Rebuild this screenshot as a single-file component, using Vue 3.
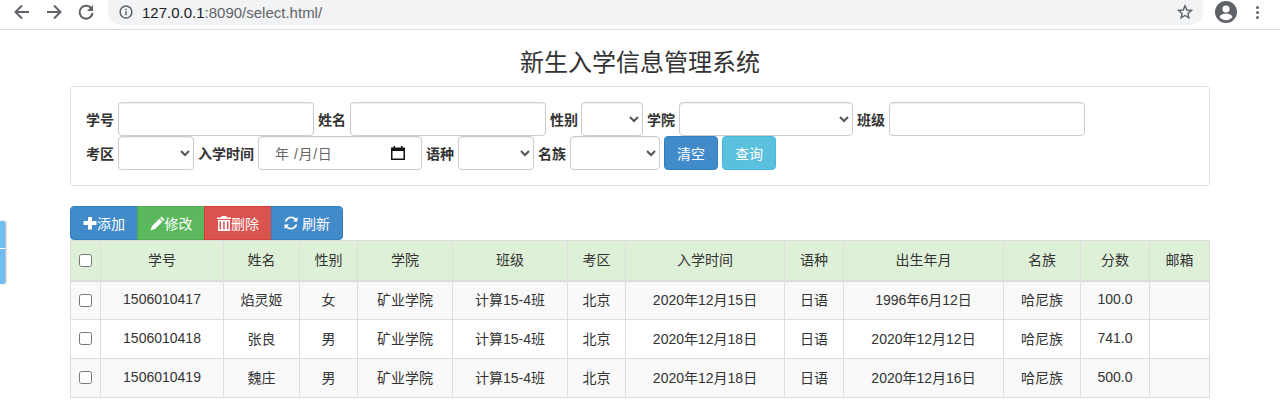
<script setup>
const columns = [
  { name: '学号', w: 123 }, { name: '姓名', w: 76 }, { name: '性别', w: 58 }, { name: '学院', w: 95 },
  { name: '班级', w: 115 }, { name: '考区', w: 58 }, { name: '入学时间', w: 159 }, { name: '语种', w: 59 },
  { name: '出生年月', w: 160 }, { name: '名族', w: 77 }, { name: '分数', w: 69 }, { name: '邮箱', w: 60 }
]

const students = [
  ['1506010417', '焰灵姬', '女', '矿业学院', '计算15-4班', '北京', '2020年12月15日', '日语', '1996年6月12日', '哈尼族', '100.0', ''],
  ['1506010418', '张良', '男', '矿业学院', '计算15-4班', '北京', '2020年12月18日', '日语', '2020年12月12日', '哈尼族', '741.0', ''],
  ['1506010419', '魏庄', '男', '矿业学院', '计算15-4班', '北京', '2020年12月18日', '日语', '2020年12月16日', '哈尼族', '500.0', '']
]
</script>

<template>
  <header class="chrome-bar">
    <svg class="nav" width="18" height="18" viewBox="0 0 18 18"><path d="M16 9H3M9 2.500 2.500 9 9 15.500" /></svg>
    <svg class="nav fwd" width="18" height="18" viewBox="0 0 18 18"><path d="M2 9h13M9 2.500 15.500 9 9 15.500" /></svg>
    <svg class="nav reload" width="18" height="18" viewBox="0 0 18 18">
      <path d="M14.600 6A6.400 6.400 0 1 0 15.400 10" />
      <path class="fill" d="M16 2v6h-6z" />
    </svg>
    <div class="url-box">
      <svg class="info" width="14" height="14" viewBox="0 0 14 14">
        <circle cx="7" cy="7" r="5.900" />
        <path d="M7 6.200v4M7 3.700v1.500" />
      </svg>
      <span class="url"><b>127.0.0.1</b>:8090/select.html/</span>
      <svg class="star" width="16" height="16" viewBox="0 0 16 16">
        <path d="M8 1.800 9.800 6l4.600.4-3.500 3 1 4.500L8 11.500l-3.900 2.400 1-4.500-3.500-3L6.200 6z" />
      </svg>
    </div>
    <svg class="avatar" width="22" height="22" viewBox="0 0 22 22">
      <circle cx="11" cy="11" r="11" fill="#5f6368" />
      <circle cx="11" cy="8" r="3.600" fill="#fff" />
      <path d="M4.500 16c1.500-2.600 4-3.500 6.500-3.500s5 .9 6.500 3.500c-1.500 2-3.800 3.200-6.500 3.200S6 18 4.500 16z" fill="#fff" />
    </svg>
    <div class="dots"><i></i><i></i><i></i></div>
  </header>

  <aside class="side-tab"></aside>

  <main class="page">
    <h3 class="title">新生入学信息管理系统</h3>

    <form class="panel" @submit.prevent>
      <div class="row">
        <label>学号</label><input class="ctl w196" type="text" />
        <label>姓名</label><input class="ctl w196" type="text" />
        <label class="tight">性别</label><select class="ctl w62"></select>
        <label>学院</label><select class="ctl w174"></select>
        <label>班级</label><input class="ctl w196" type="text" />
      </div>
      <div class="row">
        <label>考区</label><select class="ctl w76"></select>
        <label>入学时间</label>
        <div class="ctl date">
          <span>年 /月/日</span>
          <svg width="14" height="14" viewBox="0 0 14 14"><path d="M0 1.500h2.500V0h1.500v1.500h6V0h1.500v1.500H14V14H0zM1.500 5v7.500h11V5z" /></svg>
        </div>
        <label>语种</label><select class="ctl w76"></select>
        <label>名族</label><select class="ctl w90"></select>
        <button class="btn blue w54" type="button">清空</button>
        <button class="btn cyan w54" type="button">查询</button>
      </div>
    </form>

    <div class="toolbar">
      <button class="btn blue first" type="button">
        <svg width="14" height="14" viewBox="0 0 14 14"><path d="M5 1h4v4h4.500v4H9v4.500H5V9H.5V5H5z" /></svg>添加
      </button>
      <button class="btn green" type="button">
        <svg width="15" height="15" viewBox="0 0 15 15"><path d="M11.500 .5 14.500 3.500 13 5 10 2zM9.300 2.700l3 3L5 13 .5 14.500 2 10z" /></svg>修改
      </button>
      <button class="btn red" type="button">
        <svg width="14" height="15" viewBox="0 0 14 15"><path d="M4.500 0h5v1.500H14V3H0V1.500h4.500zM1 4h12v11H1zM2.500 5.500v8h1.500v-8zM6.200 5.500v8h1.500v-8zM10 5.500v8h1.500v-8z" fill-rule="evenodd" /></svg>删除
      </button>
      <button class="btn blue last" type="button">
        <svg width="14" height="14" viewBox="0 0 14 14"><path d="M13.500 1v4.500H9l1.700-1.700A4.800 4.800 0 0 0 2.600 5.500H.7A6.700 6.700 0 0 1 12 2.500zM.5 13V8.500H5L3.300 10.200a4.800 4.800 0 0 0 8.100-1.700h1.900A6.700 6.700 0 0 1 2 11.500z" /></svg>
        刷新
      </button>
    </div>

    <table class="grid">
      <colgroup>
        <col class="check-col" />
        <col v-for="c in columns" :key="c.name" :style="{ width: c.w + 'px' }" />
      </colgroup>
      <thead>
        <tr>
          <th><input type="checkbox" /></th>
          <th v-for="c in columns" :key="c.name">{{ c.name }}</th>
        </tr>
      </thead>
      <tbody>
        <tr v-for="s in students" :key="s[0]">
          <td><input type="checkbox" /></td>
          <td v-for="(v, i) in s" :key="i">{{ v }}</td>
        </tr>
      </tbody>
    </table>
  </main>
</template>

<style>
body {
  background: #fff;
  overflow: hidden;
}
</style>

<style scoped>
* {
  box-sizing: border-box;
}

.chrome-bar {
  display: flex;
  align-items: center;
  height: 30px;
  padding: 0 0 5px 13px;
  border-bottom: 1px solid #dadce0;
  font-family: "Liberation Sans", Arial, sans-serif;
}
.nav {
  fill: none;
  stroke: #5f6368;
  stroke-width: 2;
  margin-right: 14px;
}
.nav .fill {
  fill: #5f6368;
  stroke: none;
}
.nav.reload {
  margin-right: 13px;
}
.url-box {
  display: flex;
  align-items: center;
  width: 1095px;
  height: 25px;
  padding: 0 10px 0 11px;
  background: #f1f3f4;
  border-radius: 0 0 13px 13px;
}
.info {
  fill: none;
  stroke: #5f6368;
  stroke-width: 1.500;
}
.url {
  margin-left: 9px;
  flex: 1;
  font-size: 15px;
  color: #5f6368;
}
.url b {
  font-weight: normal;
  color: #202124;
}
.star {
  fill: none;
  stroke: #5f6368;
  stroke-width: 1.400;
}
.avatar {
  margin-left: 12px;
}
.dots {
  margin-left: 19px;
  display: flex;
  flex-direction: column;
  gap: 2px;
}
.dots i {
  width: 3px;
  height: 3px;
  border-radius: 50%;
  background: #5f6368;
}

.side-tab {
  position: absolute;
  left: 0;
  top: 221px;
  width: 5px;
  height: 63px;
  border-radius: 0 2px 2px 0;
  box-shadow: 1px 0 2px rgba(0, 0, 0, 0.35);
  background: linear-gradient(#6fbcf2 0 27px, #fff 27px 28px, #6fbcf2 28px);
}

.page {
  width: 1140px;
  margin: 0 auto;
  color: #333;
  font-family: "Liberation Sans", "Noto Sans CJK SC", sans-serif;
  font-size: 14px;
}
.title {
  margin: 0;
  padding-top: 16px;
  height: 56px;
  text-align: center;
  font-size: 24px;
  font-weight: 400;
  line-height: 34px;
}
.panel {
  height: 100px;
  padding: 15px;
  border: 1px solid #ddd;
  border-radius: 4px;
}
.row {
  display: flex;
  align-items: center;
  height: 34px;
}
.row label {
  font-weight: 700;
  margin-right: 4px;
  margin-left: 4px;
}
.row label:first-child {
  margin-left: 0;
}
.row label.tight {
  margin-right: 3px;
}
.ctl {
  height: 34px;
  border: 1px solid #ccc;
  border-radius: 4px;
  background: #fff;
  box-shadow: inset 0 1px 1px rgba(0, 0, 0, 0.075);
  font-size: 14px;
  color: #555;
}
.w196 { width: 196px; }
.w174 { width: 174px; }
.w62 { width: 62px; }
.w76 { width: 76px; }
.w90 { width: 90px; }
.date {
  display: flex;
  align-items: center;
  justify-content: space-between;
  width: 164px;
  padding: 0 16px;
  color: #666;
  letter-spacing: 0.6px;
}
.date svg {
  fill: #111;
}
.btn {
  display: inline-flex;
  align-items: center;
  justify-content: center;
  height: 34px;
  padding: 0;
  border: 1px solid transparent;
  border-radius: 4px;
  color: #fff;
  font-family: inherit;
  font-size: 14px;
  white-space: nowrap;
}
.btn svg {
  fill: #fff;
  flex: none;
}
.blue { background: #428bca; border-color: #357ebd; }
.cyan { background: #5bc0de; border-color: #46b8da; }
.green { background: #5cb85c; border-color: #4cae4c; }
.red { background: #d9534f; border-color: #d43f3a; }
.w54 {
  width: 54px;
  margin-left: 4px;
}

.toolbar {
  display: flex;
  margin-top: 20px;
}
.toolbar .btn {
  border-radius: 0;
  margin-left: -1px;
}
.toolbar .first {
  margin-left: 0;
  width: 68px;
  border-radius: 4px 0 0 4px;
}
.toolbar .green { width: 68px; }
.toolbar .red { width: 68px; }
.toolbar .last {
  width: 72px;
  gap: 4px;
  border-radius: 0 4px 4px 0;
}

.grid {
  width: 1140px;
  table-layout: fixed;
  border-collapse: collapse;
  text-align: center;
  font-size: 14px;
}
.check-col {
  width: 30px;
}
th, td {
  border: 1px solid #ddd;
  padding: 0 0 3px;
  font-weight: 400;
}
thead tr {
  height: 40px;
  background: #dff0d8;
}
thead th {
  border-bottom-width: 2px;
}
tbody tr {
  height: 39px;
}
tbody tr:nth-child(odd) {
  background: #f9f9f9;
}
input[type="checkbox"] {
  width: 13px;
  height: 13px;
  margin: 0;
  vertical-align: middle;
}
</style>
